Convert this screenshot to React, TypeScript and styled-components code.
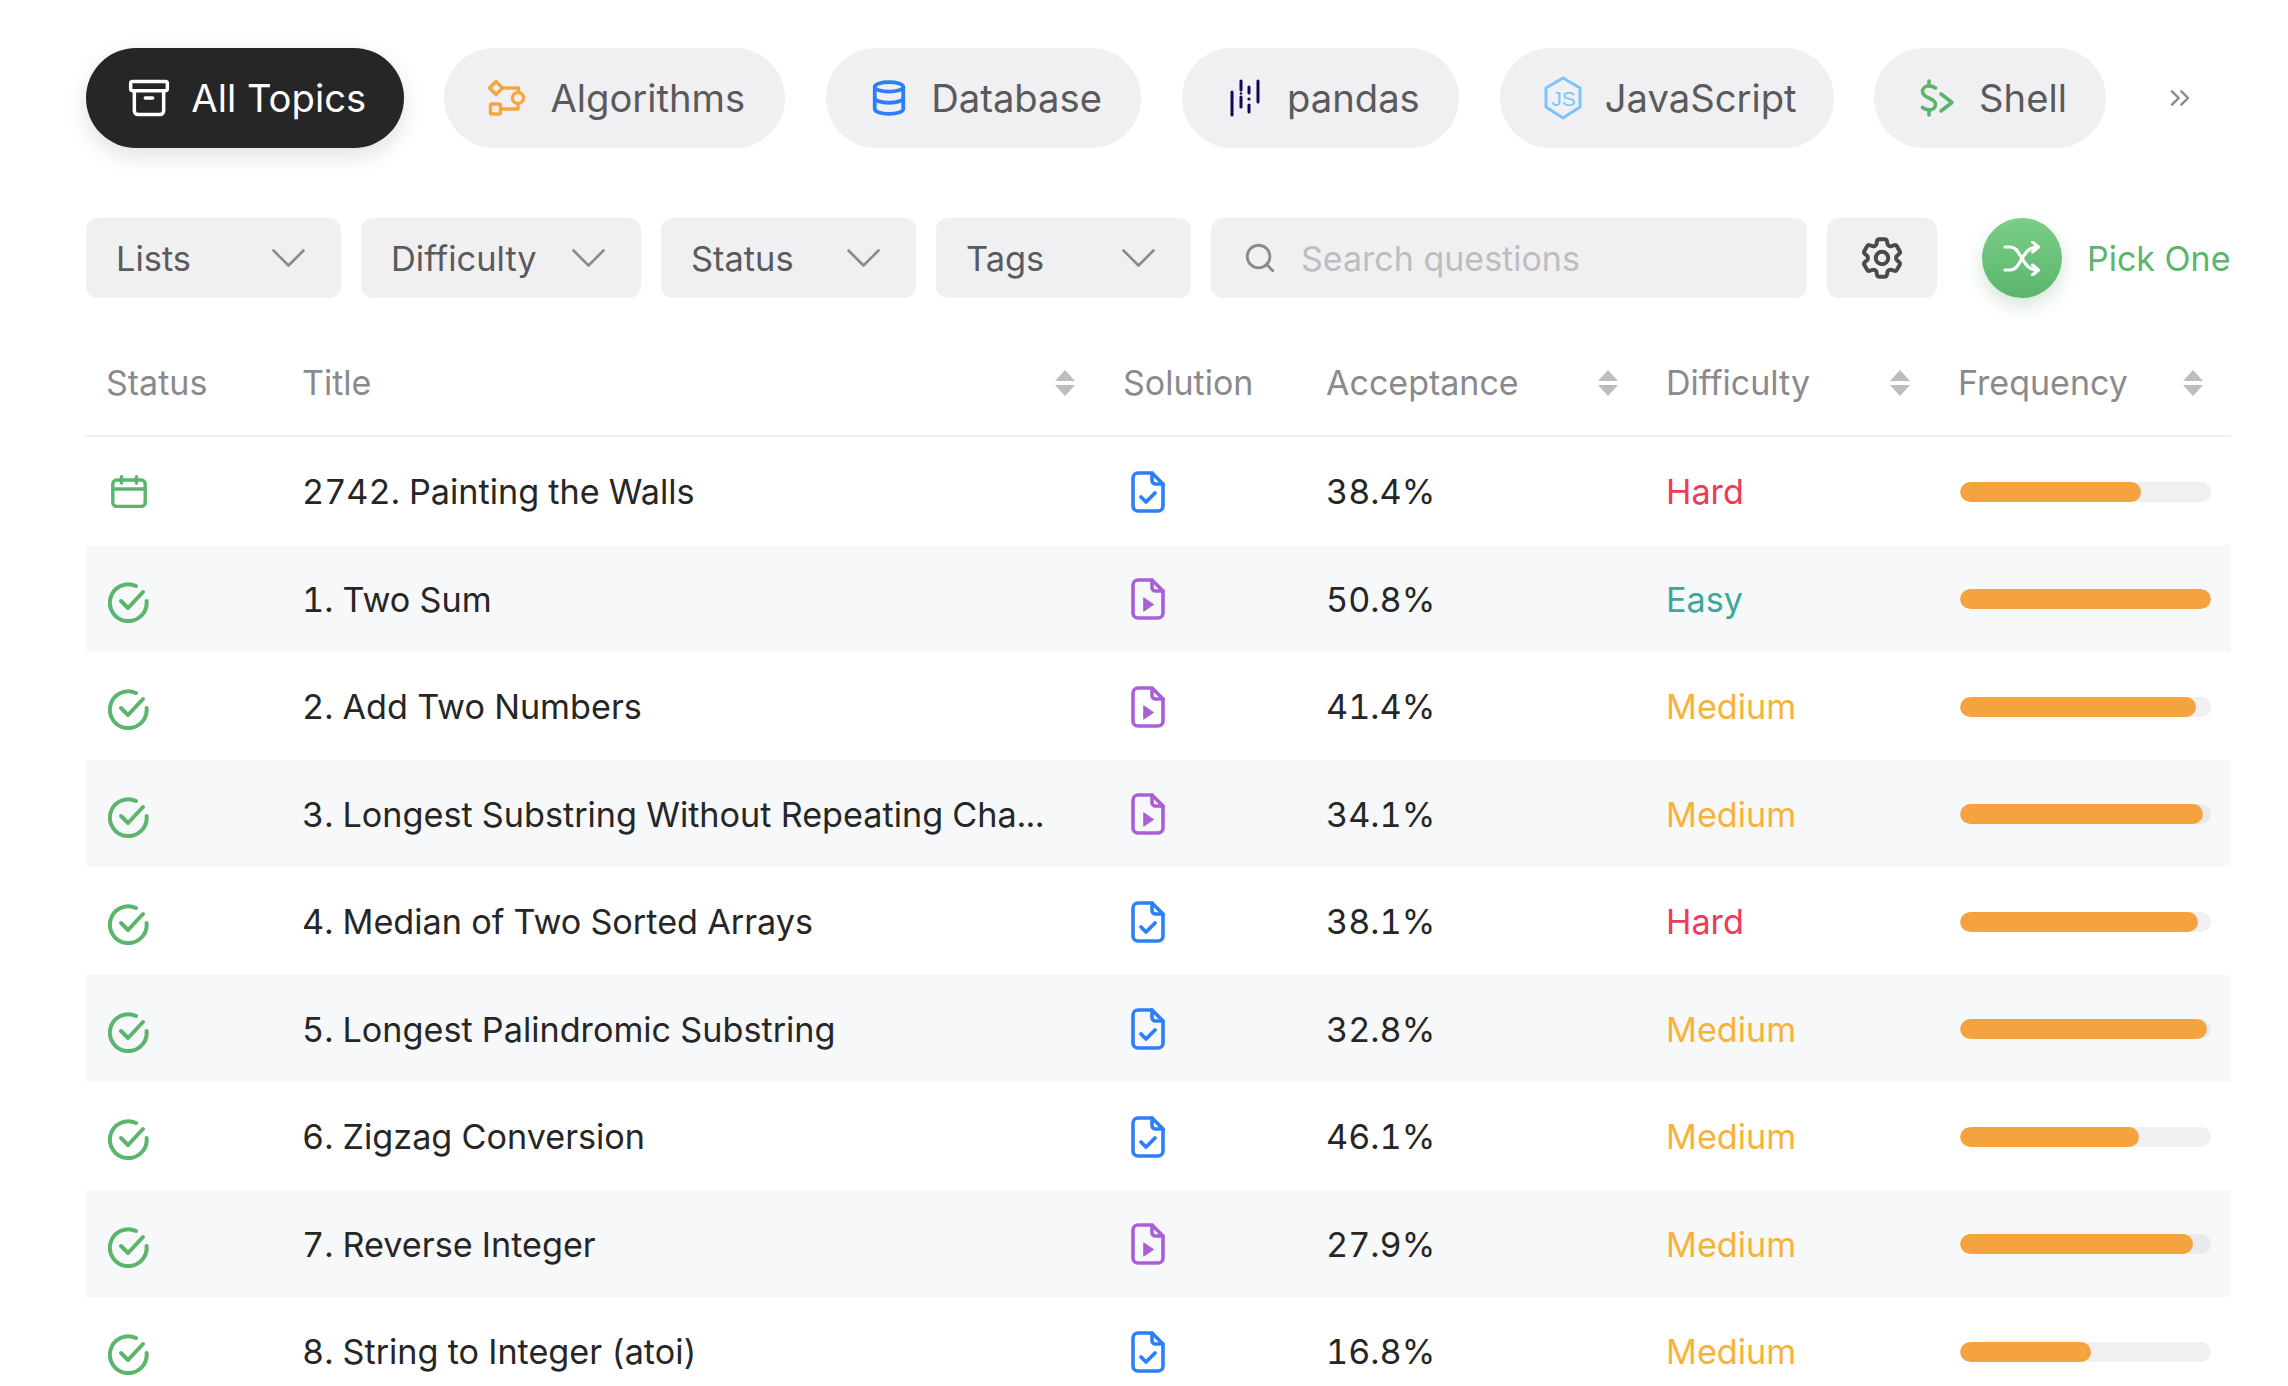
import React from "react";
import styled, { createGlobalStyle } from "styled-components";
import { Archive, ChevronsRight, Database, Search } from "lucide-react";
import { HiOutlineCog6Tooth } from "react-icons/hi2";

const GlobalStyle = createGlobalStyle`
  html, body {
    margin: 0;
    padding: 0;
    background: #fff;
    overflow: hidden;
  }
  * {
    box-sizing: border-box;
  }
`;

const Page = styled.div`
  width: 2288px;
  height: 1386px;
  overflow: hidden;
  padding: 48px 57px 0 86px;
  font-family: Inter, "Liberation Sans", sans-serif;
  color: #262626;
`;

const TopicBar = styled.div`
  display: flex;
  align-items: center;
  gap: 40.8px;
  height: 100px;
`;

const Pill = styled.div<{ $active?: boolean; $w: number; $gap: number; $pad: number }>`
  display: flex;
  align-items: center;
  justify-content: center;
  gap: ${(p) => p.$gap}px;
  width: ${(p) => p.$w}px;
  height: 100px;
  padding-left: ${(p) => p.$pad}px;
  border-radius: 50px;
  font-size: 38.2px;
  background: ${(p) => (p.$active ? "#262626" : "#f0f0f3")};
  color: ${(p) => (p.$active ? "#fff" : "#5a5a5c")};
  box-shadow: ${(p) => (p.$active ? "0 8px 22px rgba(0,0,0,0.12)" : "none")};
`;

const MoreTopics = styled.div`
  display: flex;
  align-items: center;
  margin-left: 17px;
  color: #8a8a8e;
`;

const FilterBar = styled.div`
  display: flex;
  align-items: center;
  gap: 20px;
  height: 80px;
  margin-top: 70px;
`;

const Select = styled.div<{ $w: number }>`
  display: flex;
  align-items: center;
  justify-content: space-between;
  width: ${(p) => p.$w}px;
  height: 80px;
  padding: 0 36px 0 30px;
  border-radius: 12px;
  background: #f0f0f3;
  font-size: 34.4px;
  color: #5a5a5c;
`;

const SearchBox = styled.div`
  display: flex;
  align-items: center;
  gap: 24px;
  width: 596px;
  height: 80px;
  padding: 0 32px;
  border-radius: 12px;
  background: #f0f0f3;
  font-size: 34px;
  color: #bdbdc0;
`;

const GearButton = styled.div`
  display: flex;
  align-items: center;
  justify-content: center;
  width: 110px;
  height: 80px;
  border-radius: 12px;
  background: #f0f0f3;
  color: #4a4a4c;
`;

const PickOne = styled.div`
  display: flex;
  align-items: center;
  gap: 25px;
  margin-left: 25px;
  font-size: 34px;
  color: #5cb56c;
  white-space: nowrap;
`;

const ShuffleCircle = styled.div`
  display: flex;
  align-items: center;
  justify-content: center;
  width: 80px;
  height: 80px;
  border-radius: 50%;
  color: #fff;
  background: linear-gradient(180deg, #7ace88, #5cb56c);
  box-shadow: 0 8px 18px rgba(60, 140, 80, 0.22);
`;

const columns = "196px 821px 203px 340px 292px 293px";

const HeaderRow = styled.div`
  display: grid;
  grid-template-columns: ${columns};
  align-items: center;
  height: 139px;
  padding-top: 44px;
  padding-bottom: 12px;
  border-bottom: 2px solid #efeff1;
  font-size: 34px;
  color: #8a8a8e;
`;

const HeadCell = styled.div`
  display: flex;
  align-items: center;
  justify-content: space-between;
  padding: 0 28px 0 20px;
`;

const Row = styled.div<{ $striped: boolean }>`
  display: grid;
  grid-template-columns: ${columns};
  align-items: center;
  height: 107.5px;
  font-size: 34.2px;
  font-variant-numeric: tabular-nums;
  background: ${(p) => (p.$striped ? "#f7f8fa" : "#fff")};
`;

const Cell = styled.div`
  display: flex;
  align-items: center;
  padding: 2px 20px 0;
  white-space: nowrap;
`;

const StatusCell = styled(Cell)<{ $calendar: boolean }>`
  padding-left: ${(p) => (p.$calendar ? 25 : 22)}px;
  margin-top: ${(p) => (p.$calendar ? 0 : 6)}px;
`;

const SolutionCell = styled(Cell)`
  padding-left: 28px;
`;

const FrequencyCell = styled(Cell)`
  padding-left: 22px;
`;

const DifficultyText = styled(Cell)<{ $level: string }>`
  color: ${(p) =>
    p.$level === "Hard" ? "#ef3b57" : p.$level === "Easy" ? "#3aa99b" : "#f7b23b"};
`;

const Track = styled.div<{ $striped: boolean }>`
  width: 251px;
  height: 20px;
  border-radius: 10px;
  overflow: hidden;
  background: ${(p) => (p.$striped ? "#e9eaee" : "#f0f0f3")};
`;

const Fill = styled.div`
  height: 100%;
  border-radius: 10px;
  background: #f4a33f;
`;

const AlgorithmsIcon = () => (
  <svg width="38" height="38" viewBox="0 0 38 38" fill="none" stroke="#f5a63f" strokeWidth="3.4" strokeLinejoin="round">
    <path d="M9 2.5 15.5 9 9 15.5 2.5 9Z" />
    <path d="M15.5 9H31.5V13" />
    <circle cx="31" cy="19" r="5.5" />
    <path d="M31 25V30H14" />
    <rect x="3.5" y="25" width="10" height="10" rx="1.5" />
  </svg>
);

const PandasIcon = () => (
  <svg width="30" height="38" viewBox="0 0 30 38" fill="none" stroke="#150458" strokeWidth="3" strokeLinecap="round">
    <path d="M2 13V36" />
    <path d="M11 2V11M11 18V28" />
    <path d="M19 8V14M19 26V33" />
    <path d="M28 2V23" />
    <circle cx="11" cy="14.5" r="1.3" fill="#150458" stroke="none" />
    <circle cx="19" cy="20" r="1.6" fill="#150458" stroke="none" />
  </svg>
);

const NodeIcon = () => (
  <svg width="40" height="44" viewBox="0 0 40 44" fill="none" stroke="#7cc4fb" strokeWidth="3" strokeLinejoin="round">
    <path d="M20 2 37 12V31L20 42 3 31V12Z" />
    <text x="20.5" y="30" fontFamily="Liberation Sans" fontSize="21" fill="#7cc4fb" stroke="none" textAnchor="middle">
      JS
    </text>
  </svg>
);

const ShellIcon = () => (
  <svg width="35" height="38" viewBox="0 0 35 38" fill="none" stroke="#5cb56c" strokeWidth="3.6" strokeLinecap="round" strokeLinejoin="round">
    <path d="M9 2V7M9 31V36" />
    <path d="M15.5 9C13.5 7.5 11 7 9 7 5 7 2.5 9.5 2.5 12.5 2.5 16 5.5 17.5 9 19 12.5 20.5 15.5 22 15.5 25.5 15.5 29 12.5 31 9 31 7 31 4.5 30 2.5 28.5" />
    <path d="M21 15 32 23.5 21 32" />
  </svg>
);

const ChevronDownIcon = () => (
  <svg width="33" height="18" viewBox="0 0 33 18" fill="none" stroke="#8a8a8e" strokeWidth="2.6" strokeLinecap="round" strokeLinejoin="round">
    <path d="M1.5 1.5 16.5 16.5 31.5 1.5" />
  </svg>
);

const SortIcon = () => (
  <svg width="20" height="26" viewBox="0 0 20 26" fill="#bdbdc0">
    <path d="M10 0 20 11H0Z" />
    <path d="M0 15H20L10 26Z" />
  </svg>
);

const ShuffleIcon = () => (
  <svg width="38" height="35" viewBox="0 0 38 35" fill="none" stroke="#fff" strokeWidth="3.2" strokeLinecap="round" strokeLinejoin="round">
    <path d="M2 6H7C13 6 15 11 19 17.5 23 24 26 29 35 29" />
    <path d="M2 29H7C13 29 15 24 19 17.5 23 11 26 6 35 6" />
    <path d="M29.5 1 35.5 6 29.5 11" />
    <path d="M29.5 24 35.5 29 29.5 34" />
  </svg>
);

const CalendarIcon = () => (
  <svg width="36" height="33" viewBox="0 0 36 33" fill="none" stroke="#5cb56c" strokeWidth="3.4" strokeLinecap="round">
    <rect x="1.8" y="5" width="32.4" height="26.4" rx="4" />
    <path d="M2 14H34" />
    <path d="M10.5 1.8V8M25.5 1.8V8" />
  </svg>
);

const SolvedIcon = () => (
  <svg width="41" height="41" viewBox="0 0 41 41" fill="none" stroke="#5cb56c" strokeWidth="4" strokeLinecap="round" strokeLinejoin="round">
    <path d="M28 4A18.4 18.4 0 1 0 38.6 19" />
    <path d="M13 19 20 26 35 10" />
  </svg>
);

const FileIcon = ({ kind }: { kind: "check" | "play" }) => {
  const color = kind === "check" ? "#2d7ff9" : "#a95fd8";
  return (
    <svg width="34" height="42" viewBox="0 0 34 42" fill="none" stroke={color} strokeWidth="3.6" strokeLinecap="round" strokeLinejoin="round">
      <path d="M7 2H21L32 13V35A5 5 0 0 1 27 40H7A5 5 0 0 1 2 35V7A5 5 0 0 1 7 2Z" />
      <path d="M21 2V9.5A3.5 3.5 0 0 0 24.5 13H32" />
      {kind === "check" ? (
        <path d="M10 26 15 31 24 22" strokeWidth="3.8" />
      ) : (
        <path d="M13 20 22.5 26.5 13 33Z" fill={color} strokeWidth="1" />
      )}
    </svg>
  );
};

const topics = [
  { label: "All Topics", w: 317.5, gap: 20, pad: 4, icon: <Archive size={44} strokeWidth={1.9} />, active: true },
  { label: "Algorithms", w: 341, gap: 25, pad: 3, icon: <AlgorithmsIcon /> },
  { label: "Database", w: 315, gap: 23.5, pad: 4.5, icon: <Database size={38} color="#2d7ff9" strokeWidth={2.4} /> },
  { label: "pandas", w: 277, gap: 27.5, pad: 8.5, icon: <PandasIcon /> },
  { label: "JavaScript", w: 334, gap: 22, pad: 6, icon: <NodeIcon /> },
  { label: "Shell", w: 232, gap: 24.5, pad: 5.5, icon: <ShellIcon /> },
];

const filters = [
  { label: "Lists", w: 255 },
  { label: "Difficulty", w: 280 },
  { label: "Status", w: 255 },
  { label: "Tags", w: 255 },
];

type Problem = {
  title: string;
  solution: "check" | "play";
  acceptance: string;
  difficulty: string;
  frequency: number;
};

const problems: Problem[] = [
  { title: "2742. Painting the Walls", solution: "check", acceptance: "38.4%", difficulty: "Hard", frequency: 72.3 },
  { title: "1. Two Sum", solution: "play", acceptance: "50.8%", difficulty: "Easy", frequency: 100 },
  { title: "2. Add Two Numbers", solution: "play", acceptance: "41.4%", difficulty: "Medium", frequency: 94 },
  { title: "3. Longest Substring Without Repeating Cha...", solution: "play", acceptance: "34.1%", difficulty: "Medium", frequency: 97 },
  { title: "4. Median of Two Sorted Arrays", solution: "check", acceptance: "38.1%", difficulty: "Hard", frequency: 95 },
  { title: "5. Longest Palindromic Substring", solution: "check", acceptance: "32.8%", difficulty: "Medium", frequency: 98.5 },
  { title: "6. Zigzag Conversion", solution: "check", acceptance: "46.1%", difficulty: "Medium", frequency: 71.3 },
  { title: "7. Reverse Integer", solution: "play", acceptance: "27.9%", difficulty: "Medium", frequency: 92.8 },
  { title: "8. String to Integer (atoi)", solution: "check", acceptance: "16.8%", difficulty: "Medium", frequency: 52.2 },
];

export default function App() {
  return (
    <>
      <GlobalStyle />
      <Page>
        <TopicBar>
          {topics.map((t) => (
            <Pill key={t.label} $active={t.active} $w={t.w} $gap={t.gap} $pad={t.pad}>
              {t.icon}
              {t.label}
            </Pill>
          ))}
          <MoreTopics>
            <ChevronsRight size={32} strokeWidth={1.8} />
          </MoreTopics>
        </TopicBar>

        <FilterBar>
          {filters.map((f) => (
            <Select key={f.label} $w={f.w}>
              {f.label}
              <ChevronDownIcon />
            </Select>
          ))}
          <SearchBox>
            <Search size={34} color="#8a8a8e" strokeWidth={2} />
            Search questions
          </SearchBox>
          <GearButton>
            <HiOutlineCog6Tooth size={50} strokeWidth={1.9} />
          </GearButton>
          <PickOne>
            <ShuffleCircle>
              <ShuffleIcon />
            </ShuffleCircle>
            Pick One
          </PickOne>
        </FilterBar>

        <HeaderRow>
          <HeadCell>Status</HeadCell>
          <HeadCell>
            Title
            <SortIcon />
          </HeadCell>
          <HeadCell>Solution</HeadCell>
          <HeadCell>
            Acceptance
            <SortIcon />
          </HeadCell>
          <HeadCell>
            Difficulty
            <SortIcon />
          </HeadCell>
          <HeadCell>
            Frequency
            <SortIcon />
          </HeadCell>
        </HeaderRow>

        {problems.map((p, i) => (
          <Row key={p.title} $striped={i % 2 === 1}>
            <StatusCell $calendar={i === 0}>{i === 0 ? <CalendarIcon /> : <SolvedIcon />}</StatusCell>
            <Cell>{p.title}</Cell>
            <SolutionCell>
              <FileIcon kind={p.solution} />
            </SolutionCell>
            <Cell>{p.acceptance}</Cell>
            <DifficultyText $level={p.difficulty}>{p.difficulty}</DifficultyText>
            <FrequencyCell>
              <Track $striped={i % 2 === 1}>
                <Fill style={{ width: `${p.frequency}%` }} />
              </Track>
            </FrequencyCell>
          </Row>
        ))}
      </Page>
    </>
  );
}
